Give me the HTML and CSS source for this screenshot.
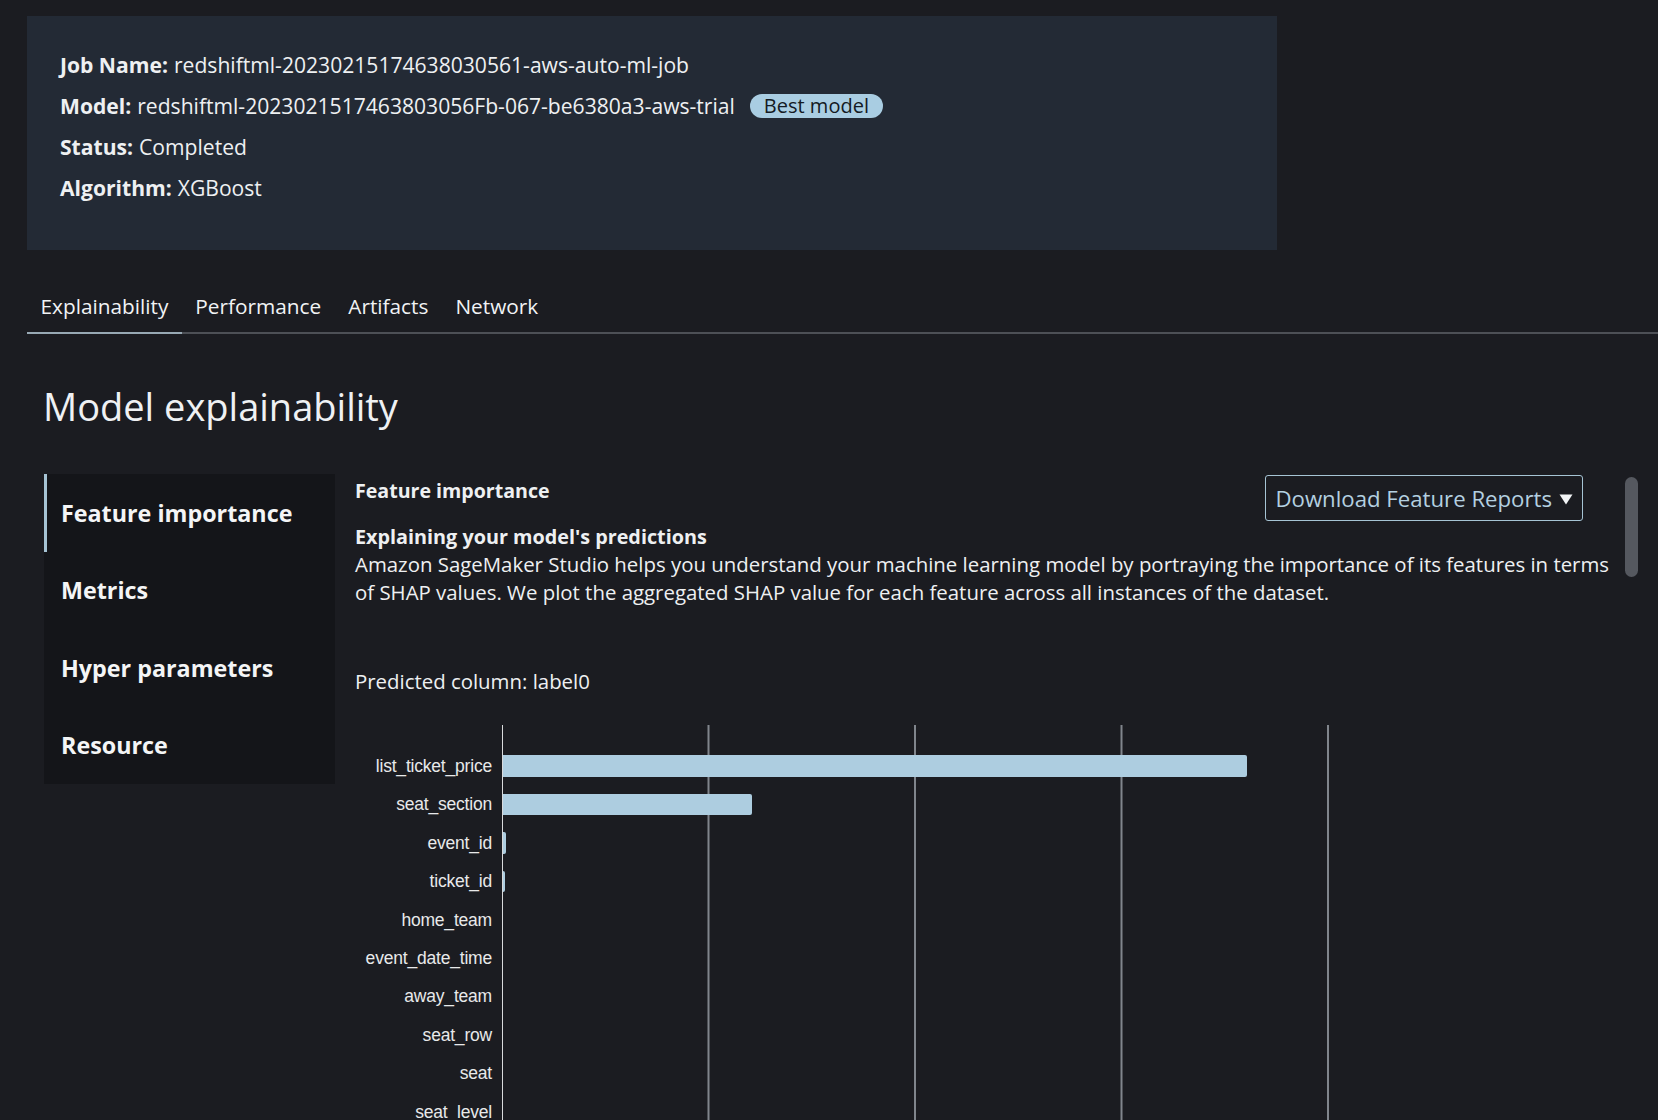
FILE: index.html
```html
<!DOCTYPE html>
<html lang="en">
<head>
<meta charset="utf-8">
<title>Model explainability</title>
<link rel="stylesheet" href="styles.css">
</head>
<body>
<div class="page">
  <section class="summary">
    <div class="summary-row"><b>Job Name:</b> redshiftml-20230215174638030561-aws-auto-ml-job</div>
    <div class="summary-row"><b>Model:</b> redshiftml-2023021517463803056Fb-067-be6380a3-aws-trial <span class="badge">Best model</span></div>
    <div class="summary-row"><b>Status:</b> Completed</div>
    <div class="summary-row"><b>Algorithm:</b> XGBoost</div>
  </section>

  <nav class="tabs">
    <span class="tab active">Explainability</span>
    <span class="tab">Performance</span>
    <span class="tab">Artifacts</span>
    <span class="tab">Network</span>
  </nav>

  <h1 class="page-title">Model explainability</h1>

  <div class="explain">
    <aside class="side-nav">
      <div class="side-item active">Feature importance</div>
      <div class="side-item">Metrics</div>
      <div class="side-item">Hyper parameters</div>
      <div class="side-item">Resource</div>
    </aside>

    <main class="content">
      <div class="content-head">
        <h2 class="section-title">Feature importance</h2>
        <button class="download-btn">Download Feature Reports<svg class="caret" width="14" height="11" viewBox="0 0 14 11" aria-hidden="true"><path d="M0.5 0.5 H13.5 L7 10.5 Z" fill="#f3f5f7"/></svg></button>
      </div>
      <h3 class="sub-title">Explaining your model's predictions</h3>
      <p class="desc">Amazon SageMaker Studio helps you understand your machine learning model by portraying the importance of its features in terms of SHAP values. We plot the aggregated SHAP value for each feature across all instances of the dataset.</p>
      <p class="predicted">Predicted column: label0</p>

      <div class="chart">
        <div class="chart-labels">
          <div class="chart-label">list_ticket_price</div>
          <div class="chart-label">seat_section</div>
          <div class="chart-label">event_id</div>
          <div class="chart-label">ticket_id</div>
          <div class="chart-label">home_team</div>
          <div class="chart-label">event_date_time</div>
          <div class="chart-label">away_team</div>
          <div class="chart-label">seat_row</div>
          <div class="chart-label">seat</div>
          <div class="chart-label">seat_level</div>
        </div>
        <div class="chart-plot">
          <div class="bar-row"><div class="bar" style="width: 744px"></div></div>
          <div class="bar-row"><div class="bar" style="width: 249px"></div></div>
          <div class="bar-row"><div class="bar" style="width: 3px"></div></div>
          <div class="bar-row"><div class="bar" style="width: 2px"></div></div>
          <div class="bar-row"></div>
          <div class="bar-row"></div>
          <div class="bar-row"></div>
          <div class="bar-row"></div>
          <div class="bar-row"></div>
          <div class="bar-row"></div>
        </div>
      </div>
    </main>

    <div class="scroll-track"><div class="scroll-thumb"></div></div>
  </div>
</div>
</body>
</html>
```

FILE: styles.css
```css
html, body {
  margin: 0;
  padding: 0;
  background: #1b1c21;
  overflow: hidden;
}

body {
  font-family: "Open Sans", "Lato", sans-serif;
  color: #eef0f2;
}

.page {
  padding: 16px 0 0 27px;
}

/* summary panel */
.summary {
  width: 1250px;
  box-sizing: border-box;
  background: #232a35;
  padding: 28px 33px 42px;
}

.summary-row {
  font-size: 21.1px;
  line-height: 41px;
  height: 41px;
  white-space: nowrap;
  display: flex;
  align-items: center;
}

.summary-row b {
  font-weight: 700;
  margin-right: 6px;
}

.badge {
  display: inline-flex;
  align-items: center;
  height: 24px;
  margin-left: 15px;
  padding: 0 14px;
  border-radius: 12px;
  background: #a9cde2;
  color: #141a23;
  font-size: 20px;
  line-height: 24px;
}

/* tabs */
.tabs {
  display: flex;
  margin-top: 26px;
  border-bottom: 2px solid #4d5056;
}

.tab {
  padding: 18px 13.5px 14px;
  font-size: 20.8px;
  line-height: 24px;
  color: #f1f3f5;
  margin-bottom: -2px;
  border-bottom: 2px solid transparent;
}

.tab.active {
  border-bottom-color: #98a9b4;
}

.page-title {
  margin: 49px 0 0 16px;
  font-size: 38px;
  line-height: 46px;
  font-weight: 400;
  color: #eff1f3;
}

/* explain layout */
.explain {
  display: flex;
  align-items: flex-start;
  margin: 45px 0 0 17px;
  padding-right: 20px;
}

.side-nav {
  width: 291px;
  flex: none;
  background: #141519;
}

.side-item {
  height: 77.5px;
  display: flex;
  align-items: center;
  padding-left: 14px;
  border-left: 3px solid transparent;
  font-size: 23.3px;
  font-weight: 700;
  color: #f4f5f6;
}

.side-item.active {
  border-left-color: #a6c3d4;
}

.content {
  flex: 1;
  min-width: 0;
  margin-left: 20px;
  padding-top: 1px;
}

.content-head {
  display: flex;
  justify-content: space-between;
  align-items: flex-start;
}

.section-title {
  margin: 0;
  padding-top: 2px;
  font-size: 19.6px;
  line-height: 27px;
  font-weight: 700;
}

.download-btn {
  display: flex;
  align-items: center;
  height: 46px;
  margin-right: 32px;
  padding: 0 9px;
  box-sizing: border-box;
  background: transparent;
  border: 1px solid #a6c4d4;
  border-radius: 3px;
  color: #b4d0e0;
  font-family: inherit;
  font-size: 22.2px;
}

.caret {
  margin-left: 7px;
  margin-top: 3px;
}

.sub-title {
  margin: 3px 0 0;
  font-size: 19.8px;
  line-height: 25.5px;
  font-weight: 700;
}

.desc {
  margin: 0;
  font-size: 20.4px;
  line-height: 28px;
}

.predicted {
  margin: 62px 0 0;
  font-size: 20.4px;
  line-height: 27.5px;
}

/* chart */
.chart {
  display: flex;
  margin-top: 30px;
}

.chart-labels {
  width: 147px;
  flex: none;
  padding-top: 22px;
}

.chart-label {
  height: 38.4px;
  line-height: 38.4px;
  padding-right: 10px;
  text-align: right;
  font-family: "Liberation Sans", Arial, sans-serif;
  font-size: 17.5px;
  letter-spacing: -0.2px;
  color: #e8e9ea;
}

.chart-plot {
  width: 826px;
  flex: none;
  padding-top: 22px;
  padding-bottom: 30px;
  border-left: 1.5px solid #d9dadc;
  background-image: linear-gradient(to right, transparent 205px, #80858c 205px, #80858c 206.5px, transparent 206.5px);
  background-size: 206.5px 100%;
  background-repeat: repeat-x;
}

.bar-row {
  height: 38.4px;
  display: flex;
  align-items: center;
}

.bar {
  height: 21.5px;
  background: #adcde0;
  border-radius: 0 2px 2px 0;
}

/* scrollbar */
.scroll-track {
  width: 13px;
  flex: none;
  margin-left: 10px;
  padding-top: 3px;
}

.scroll-thumb {
  height: 100px;
  border-radius: 7px;
  background: #55585f;
}
```
